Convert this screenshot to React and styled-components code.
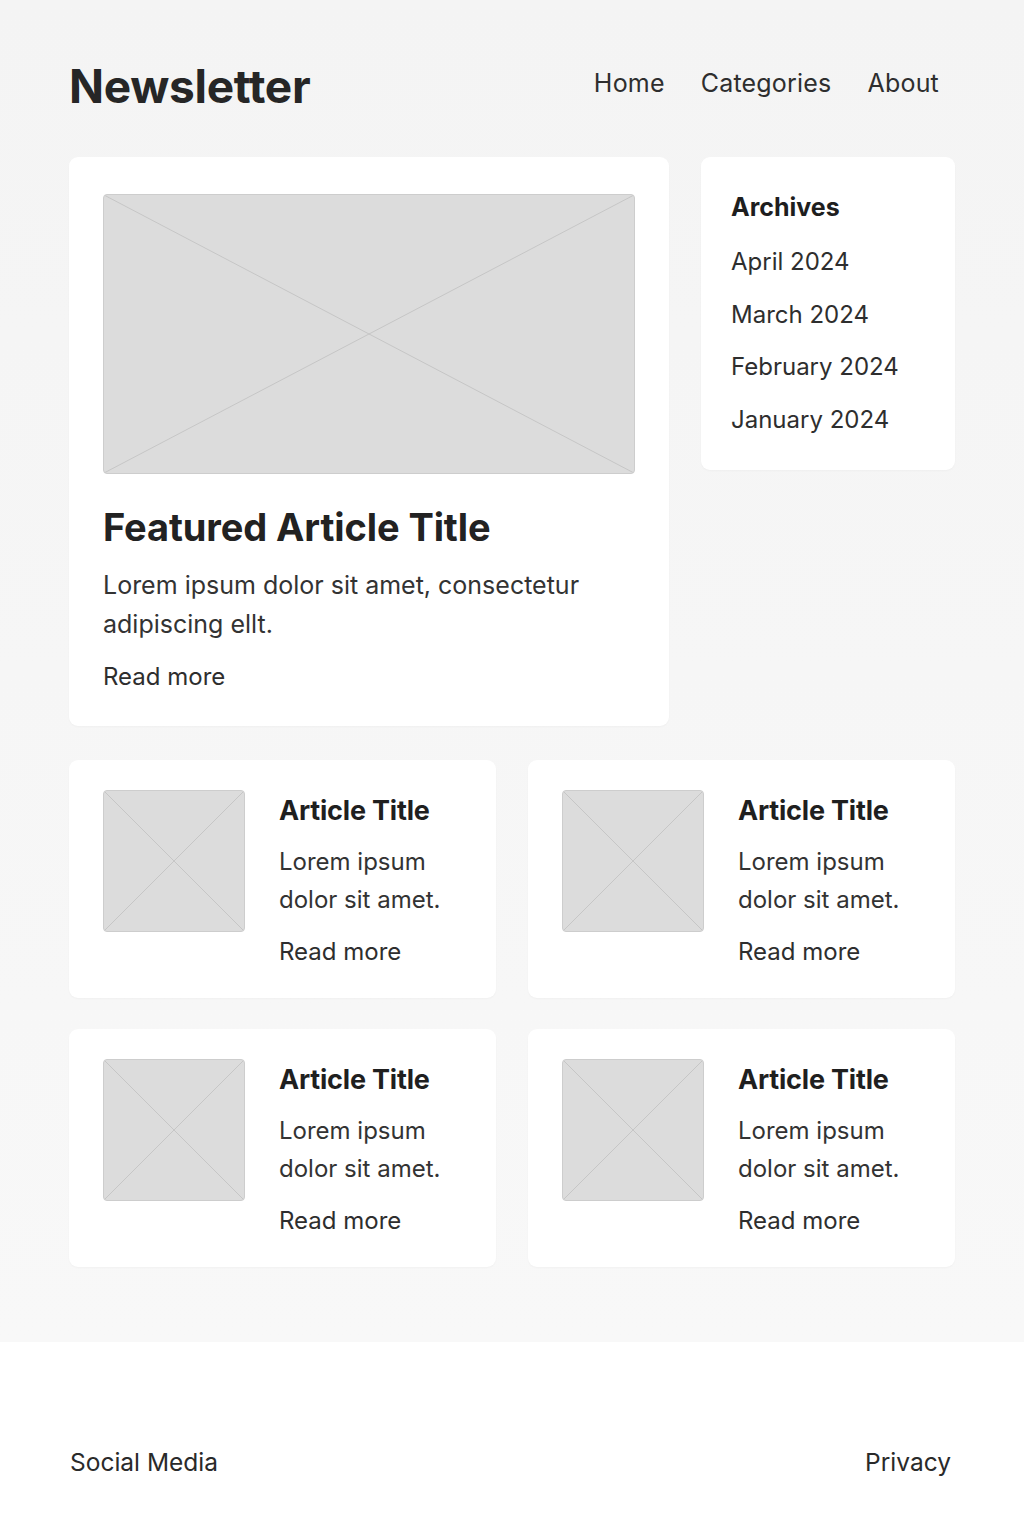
import React from "react";
import styled, { createGlobalStyle } from "styled-components";

const Global = createGlobalStyle`
  html, body { margin: 0; padding: 0; }
  body {
    background: #f5f5f5;
    font-family: Inter, "Noto Sans", "Liberation Sans", sans-serif;
    color: #2a2a2a;
  }
  * { box-sizing: border-box; }
`;

const Page = styled.div`
  display: flex;
  flex-direction: column;
  min-height: 1536px;
`;

const Main = styled.main`
  flex: 1;
  padding: 0 69px 75px 69px;
  background: linear-gradient(#f4f4f4, #f8f8f8);
`;

const Header = styled.header`
  display: flex;
  align-items: center;
  justify-content: space-between;
  height: 157px;
  padding: 10px 16px 0 0;
`;

const Logo = styled.h1`
  margin: 0;
  font-size: 46px;
  font-weight: 700;
  color: #262626;
  letter-spacing: -0.3px;
  line-height: 1;
  transform: translateY(2px);
`;

const Nav = styled.nav`
  display: flex;
  gap: 36px;
`;

const NavLink = styled.a`
  font-size: 25px;
  letter-spacing: 0.2px;
  color: #2e2e2e;
  text-decoration: none;
  line-height: 1;
`;

const TopRow = styled.div`
  display: grid;
  grid-template-columns: 600px 1fr;
  gap: 32px;
  align-items: start;
`;

const Card = styled.div`
  background: #ffffff;
  border-radius: 9px;
  box-shadow: 0 1px 2px rgba(0, 0, 0, 0.03);
`;

const FeaturedCard = styled(Card)`
  padding: 37px 34px 30px 34px;
`;

const SideCard = styled(Card)`
  padding: 33px 30px 24px 30px;
`;

const PlaceholderBox = styled.div`
  width: ${(p) => p.$w};
  height: ${(p) => p.$h}px;
  background: #dcdcdc;
  border: 1px solid #cdcdcd;
  border-radius: 4px;
  overflow: hidden;
  flex-shrink: 0;
  svg { display: block; width: 100%; height: 100%; }
`;

const Placeholder = ({ w, h }) => (
  <PlaceholderBox $w={w} $h={h}>
    <svg viewBox="0 0 100 100" preserveAspectRatio="none">
      <line x1="0" y1="0" x2="100" y2="100" stroke="#c6c6c6" strokeWidth="1" vectorEffect="non-scaling-stroke" />
      <line x1="100" y1="0" x2="0" y2="100" stroke="#c6c6c6" strokeWidth="1" vectorEffect="non-scaling-stroke" />
    </svg>
  </PlaceholderBox>
);

const FeaturedTitle = styled.h2`
  margin: 32px 0 0 0;
  font-size: 38px;
  font-weight: 700;
  line-height: 43px;
  color: #222;
  letter-spacing: -0.1px;
`;

const Body = styled.p`
  margin: ${(p) => p.$mt || 0}px 0 0 0;
  font-size: ${(p) => p.$fs || 24}px;
  line-height: ${(p) => p.$lh || 39}px;
  color: #333;
  font-weight: 400;
`;

const ReadMore = styled.a`
  display: block;
  margin-top: ${(p) => p.$mt}px;
  font-size: 24px;
  line-height: 38px;
  color: #2e2e2e;
  text-decoration: none;
`;

const SideTitle = styled.h3`
  margin: 0 0 12px 0;
  font-size: 25px;
  font-weight: 700;
  line-height: 34px;
  color: #1e1e1e;
`;

const ArchiveList = styled.ul`
  list-style: none;
  margin: 0;
  padding: 0;
`;

const ArchiveItem = styled.li`
  font-size: 24px;
  line-height: 52.5px;
  color: #2e2e2e;
`;

const Grid = styled.div`
  display: grid;
  grid-template-columns: 1fr 1fr;
  column-gap: 32px;
  row-gap: 31px;
  margin-top: 34px;
`;

const SmallCard = styled(Card)`
  display: flex;
  gap: 34px;
  padding: 30px 34px 27px 34px;
  align-items: flex-start;
`;

const SmallText = styled.div`
  display: flex;
  flex-direction: column;
  padding-top: 4px;
`;

const SmallTitle = styled.h3`
  margin: 0;
  font-size: 27px;
  font-weight: 700;
  line-height: 34px;
  color: #1f1f1f;
  letter-spacing: -0.2px;
`;

const Footer = styled.footer`
  background: #ffffff;
  height: 194px;
  display: flex;
  align-items: center;
  justify-content: space-between;
  padding: 46px 73px 0 70px;
`;

const FooterLink = styled.a`
  font-size: 24.5px;
  color: #2a2a2a;
  text-decoration: none;
`;

const articles = [1, 2, 3, 4];
const months = ["April 2024", "March 2024", "February 2024", "January 2024"];

export default function App() {
  return (
    <>
      <Global />
      <Page>
        <Main>
          <Header>
            <Logo>Newsletter</Logo>
            <Nav>
              <NavLink href="#">Home</NavLink>
              <NavLink href="#">Categories</NavLink>
              <NavLink href="#">About</NavLink>
            </Nav>
          </Header>
          <TopRow>
            <FeaturedCard>
              <Placeholder w="100%" h={280} />
              <FeaturedTitle>Featured Article Title</FeaturedTitle>
              <Body $mt={17} $fs={25}>
                Lorem ipsum dolor sit amet, consectetur adipiscing ellt.
              </Body>
              <ReadMore href="#" $mt={14}>Read more</ReadMore>
            </FeaturedCard>
            <SideCard>
              <SideTitle>Archives</SideTitle>
              <ArchiveList>
                {months.map((m) => (
                  <ArchiveItem key={m}>{m}</ArchiveItem>
                ))}
              </ArchiveList>
            </SideCard>
          </TopRow>
          <Grid>
            {articles.map((a) => (
              <SmallCard key={a}>
                <Placeholder w="142px" h={142} />
                <SmallText>
                  <SmallTitle>Article Title</SmallTitle>
                  <Body $mt={15} $lh={38}>
                    Lorem ipsum
                    <br />
                    dolor sit amet.
                  </Body>
                  <ReadMore href="#" $mt={14}>Read more</ReadMore>
                </SmallText>
              </SmallCard>
            ))}
          </Grid>
        </Main>
        <Footer>
          <FooterLink href="#">Social Media</FooterLink>
          <FooterLink href="#">Privacy</FooterLink>
        </Footer>
      </Page>
    </>
  );
}
